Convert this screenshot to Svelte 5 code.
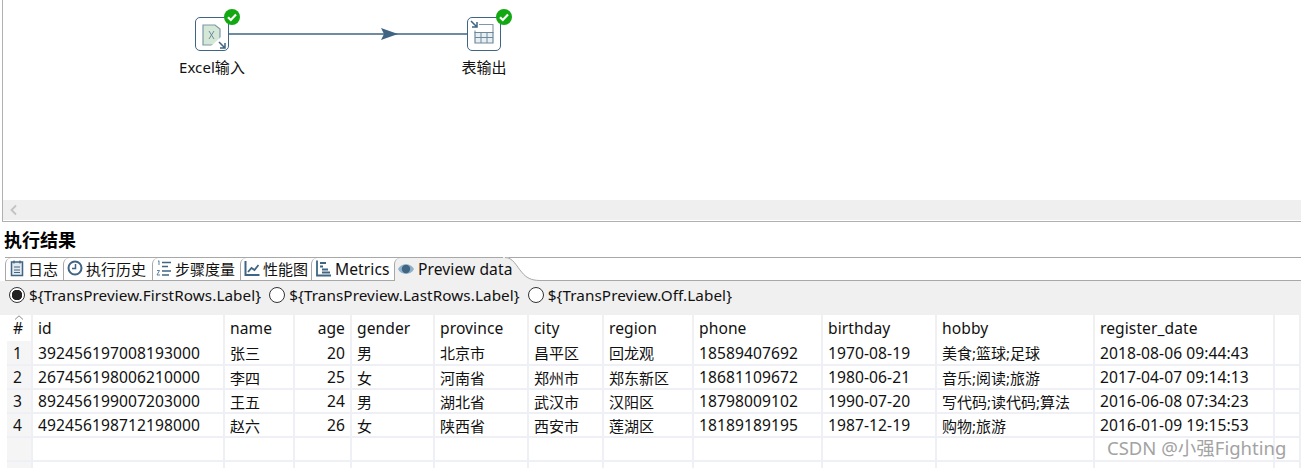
<script>
  const columns = [
    { key: 'id', width: 192 },
    { key: 'name', width: 70, cjk: true },
    { key: 'age', width: 57, right: true },
    { key: 'gender', width: 83, cjk: true },
    { key: 'province', width: 94, cjk: true },
    { key: 'city', width: 75, cjk: true },
    { key: 'region', width: 90, cjk: true },
    { key: 'phone', width: 129 },
    { key: 'birthday', width: 114 },
    { key: 'hobby', width: 158, cjk: true },
    { key: 'register_date', width: 180 }
  ];

  const rows = [
    { id: '392456197008193000', name: '张三', age: 20, gender: '男', province: '北京市', city: '昌平区', region: '回龙观', phone: '18589407692', birthday: '1970-08-19', hobby: '美食;篮球;足球', register_date: '2018-08-06 09:44:43' },
    { id: '267456198006210000', name: '李四', age: 25, gender: '女', province: '河南省', city: '郑州市', region: '郑东新区', phone: '18681109672', birthday: '1980-06-21', hobby: '音乐;阅读;旅游', register_date: '2017-04-07 09:14:13' },
    { id: '892456199007203000', name: '王五', age: 24, gender: '男', province: '湖北省', city: '武汉市', region: '汉阳区', phone: '18798009102', birthday: '1990-07-20', hobby: '写代码;读代码;算法', register_date: '2016-06-08 07:34:23' },
    { id: '492456198712198000', name: '赵六', age: 26, gender: '女', province: '陕西省', city: '西安市', region: '莲湖区', phone: '18189189195', birthday: '1987-12-19', hobby: '购物;旅游', register_date: '2016-01-09 19:15:53' },
    {},
    {}
  ];

  const options = ['${TransPreview.FirstRows.Label}', '${TransPreview.LastRows.Label}', '${TransPreview.Off.Label}'];
  let picked = 0;

  const tabs = [
    { label: '日志', icon: 'log', w: 58 },
    { label: '执行历史', icon: 'clock', w: 89 },
    { label: '步骤度量', icon: 'steps', w: 88 },
    { label: '性能图', icon: 'chart', w: 71 },
    { label: 'Metrics', icon: 'metrics', w: 83, latin: true }
  ];
</script>

<div class="page">
  <section class="canvas">
    <div class="graph">
      <svg class="hop" width="1298" height="60" viewBox="0 0 1298 60">
        <path d="M226 34H464" stroke="#3f6583" stroke-width="1.4" fill="none" />
        <path d="M378 28l17 6-17 6 3-6z" fill="#3f6583" />
      </svg>

      <div class="step excel">
        <div class="box">
          <svg width="32" height="32" viewBox="0 0 32 32">
            <path d="M7 7h12l5 4v16H7z" fill="#d5e8d8" stroke="#7d98a8" stroke-width="1.2" />
            <path d="M15 28l10-9v9z" fill="#fff" />
            <path d="M13 13l5 8M18 13l-5 8" stroke="#6d8a9c" stroke-width="1" fill="none" />
            <path d="M23 24l6 6M29 25v5h-5" stroke="#3f6583" stroke-width="1.5" fill="none" />
          </svg>
        </div>
        <svg class="ok" width="16" height="16" viewBox="0 0 16 16">
          <circle cx="8" cy="8" r="8" fill="#12a812" />
          <path d="M4 8.2l2.800 2.800L12 5.600" stroke="#fff" stroke-width="2.200" fill="none" />
        </svg>
        <span class="caption">Excel输入</span>
      </div>

      <div class="step out">
        <div class="box">
          <svg width="32" height="32" viewBox="0 0 32 32">
            <path d="M3 3l6 6M9 4v5H4" stroke="#3f6583" stroke-width="1.500" fill="none" />
            <path d="M11 6.500h14v8H7v-2" stroke="#7d98a8" stroke-width="1.100" fill="none" />
            <path d="M7 14.500h18V25H7z" fill="#e8eef2" stroke="#6d8a9c" stroke-width="1.200" />
            <path d="M13 14.500V25M19 14.500V25M7 19.500h18" stroke="#6d8a9c" stroke-width="1" fill="none" />
          </svg>
        </div>
        <svg class="ok" width="16" height="16" viewBox="0 0 16 16">
          <circle cx="8" cy="8" r="8" fill="#12a812" />
          <path d="M4 8.200l2.800 2.800L12 5.600" stroke="#fff" stroke-width="2.200" fill="none" />
        </svg>
        <span class="caption">表输出</span>
      </div>
    </div>
    <div class="hscroll">
      <svg width="10" height="12" viewBox="0 0 10 12"><path d="M7 1.500L2.500 6 7 10.500" stroke="#c2c2c2" stroke-width="1.800" fill="none" /></svg>
    </div>
  </section>

  <h2>执行结果</h2>

  <div class="tabstrip">
    {#each tabs as tab}
      <div class="tab" class:latin={tab.latin} style="width: {tab.w}px">
        <svg width="16" height="18" viewBox="0 0 16 18">
          {#if tab.icon === 'log'}
            <rect x="2.500" y="3" width="11" height="13.500" fill="#e3ebf1" stroke="#3f6583" stroke-width="1.500" />
            <path d="M5 1.500v3M11 1.500v3M5 8h6M5 11h6M5 13.500h6" stroke="#3f6583" stroke-width="1.200" />
          {:else if tab.icon === 'clock'}
            <circle cx="8" cy="9" r="6.500" fill="#fff" stroke="#3f6583" stroke-width="2" />
            <path d="M8.500 5v4.500H5" stroke="#3f6583" stroke-width="1.500" fill="none" />
          {:else if tab.icon === 'steps'}
            <path d="M6 3.500h9M6 7.500h6M6 12h9M6 16h7" stroke="#3f6583" stroke-width="1.300" />
            <path d="M2 2.500l1-.8v4.300M1 11.500h2.500l-2.500 4.500h3" stroke="#4d7390" stroke-width=".9" fill="none" />
          {:else if tab.icon === 'chart'}
            <path d="M1.500 2v14h14" stroke="#3f6583" stroke-width="2" fill="none" />
            <path d="M4 13l3.500-4 3 2 4-5" stroke="#3f6583" stroke-width="1.800" fill="none" />
          {:else}
            <path d="M2 1.500v15h14" stroke="#3f6583" stroke-width="1.800" fill="none" />
            <path d="M5 4h6M5 7.500h3M7 10.500h6M7 13.500h8" stroke="#3f6583" stroke-width="2" />
          {/if}
        </svg>
        <span>{tab.label}</span>
      </div>
    {/each}
    <div class="tab active">
      <svg width="16" height="18" viewBox="0 0 16 18">
        <path d="M0 9c3-6.500 13-6.500 16 0-3 6.500-13 6.500-16 0z" fill="#8fb0c8" />
        <circle cx="8" cy="9" r="4.200" fill="#3f6583" />
      </svg>
      <span>Preview data</span>
    </div>
    <svg class="curve" width="37" height="24" viewBox="0 0 37 24">
      <path d="M0 24V0h2c8 0 11 8 17 15 4 5 9 8 18 8v1z" fill="#f0f0f0" />
      <path d="M2 .500c8 0 11 8 17 15 4 5 9 8 18 8" stroke="#a8a8a8" fill="none" />
    </svg>
    <div class="rest"></div>
  </div>

  <div class="radios">
    {#each options as option, i}
      <label>
        <input type="radio" name="rows" value={i} bind:group={picked} />
        <span>{option}</span>
      </label>
    {/each}
  </div>

  <table>
    <colgroup>
      <col style="width: 25px" />
      {#each columns as col}
        <col style="width: {col.width}px" />
      {/each}
      <col />
    </colgroup>
    <thead>
      <tr>
        <th class="num">
          <svg class="sort" width="10" height="5" viewBox="0 0 10 5"><path d="M1 4.500L5 .8 9 4.500" stroke="#8a8a8a" fill="none" /></svg>
          #
        </th>
        {#each columns as col}
          <th class:right={col.right}>{col.key}</th>
        {/each}
        <th></th>
      </tr>
    </thead>
    <tbody>
      {#each rows as row, i}
        <tr>
          <td class="num">{row.id ? i + 1 : ''}</td>
          {#each columns as col}
            <td class:right={col.right} class:cjk={col.cjk}>{row[col.key] ?? ''}</td>
          {/each}
          <td></td>
        </tr>
      {/each}
    </tbody>
  </table>

  <div class="mark">CSDN @小强Fighting</div>
</div>

<style>
  :global(body) {
    margin: 0;
    background: #fff;
    overflow: hidden;
  }
  .page {
    position: relative;
    width: 1301px;
    height: 468px;
    overflow: hidden;
    font-family: "Noto Sans", "Noto Sans CJK SC", sans-serif;
    font-size: 15.600px;
    letter-spacing: .08px;
    color: #111;
  }
  .canvas {
    height: 221px;
    margin-left: 2px;
    border-left: 1px solid #b0b0b0;
    border-bottom: 1px solid #b0b0b0;
    display: flex;
    flex-direction: column;
  }
  .graph {
    position: relative;
    height: 200px;
  }
  .hop {
    position: absolute;
    left: 0;
    top: 0;
  }
  .step {
    position: absolute;
    top: 17px;
    width: 34px;
  }
  .excel { left: 192px; }
  .out { left: 464px; }
  .box {
    width: 32px;
    height: 32px;
    border: 1px solid #3f6583;
    border-radius: 5px;
    background: #fff;
    position: relative;
  }
  .ok {
    position: absolute;
    left: 29px;
    top: -8px;
  }
  .caption {
    position: absolute;
    top: 41px;
    left: 50%;
    transform: translateX(-50%);
    white-space: nowrap;
    font-size: 15px;
    line-height: 18px;
  }
  .hscroll {
    height: 20px;
    background: #efefef;
    padding-left: 6px;
    display: flex;
    align-items: center;
  }
  h2 {
    margin: 0;
    height: 35px;
    padding-left: 4px;
    font-size: 18px;
    letter-spacing: 0;
    line-height: 36px;
    font-weight: 700;
    color: #000;
  }
  .tabstrip {
    display: flex;
    height: 24px;
    margin-left: 5px;
    box-sizing: border-box;
    border-top: 1px solid #a8a8a8;
    position: relative;
  }
  .tab {
    flex: none;
    height: 23px;
    box-sizing: border-box;
    border-left: 1px solid #a8a8a8;
    border-bottom: 1px solid #a8a8a8;
    border-top-left-radius: 6px;
    display: flex;
    align-items: center;
    gap: 3px;
    padding: 0 0 2px 3px;
    white-space: nowrap;
    font-size: 15px;
    letter-spacing: 0;
  }
  .tab svg {
    flex: none;
  }
  .tab.latin {
    font-size: 15.600px;
    letter-spacing: .08px;
    gap: 4px;
  }
  .tab.latin span {
    padding-top: 2px;
  }
  .tab.active {
    width: 109px;
    border-bottom: 0;
    background: #f0f0f0;
    font-size: 15.600px;
    letter-spacing: .08px;
    gap: 4px;
  }
  .tab.active span {
    position: relative;
    z-index: 1;
  }
  .curve {
    flex: none;
    margin-top: -1px;
  }
  .rest {
    flex: 1;
    height: 23px;
    box-sizing: border-box;
    border-bottom: 1px solid #a8a8a8;
  }
  .radios {
    height: 34px;
    box-sizing: border-box;
    padding: 0 0 6px 9px;
    background: #f0f0f0;
    display: flex;
    align-items: center;
    gap: 8px;
    font-size: 15.270px;
  }
  .radios label {
    display: flex;
    align-items: center;
    gap: 4px;
    white-space: nowrap;
  }
  .radios input {
    appearance: none;
    width: 16px;
    height: 16px;
    margin: 0;
    border: 1px solid #333;
    border-radius: 50%;
    background: #fff;
  }
  .radios input:checked {
    background: radial-gradient(circle, #222 0 5px, #fff 5.500px);
  }
  table {
    margin-left: 7px;
    width: 1294px;
    table-layout: fixed;
    border-collapse: collapse;
  }
  th, td {
    padding: 0 5px;
    text-align: left;
    font-weight: 400;
    white-space: nowrap;
    box-sizing: border-box;
    border-right: 2px solid #eef0f6;
  }
  th {
    height: 26px;
    border-right-color: #f0f0f0;
  }
  td {
    height: 24px;
    border-bottom: 2px solid #eef0f6;
  }
  td.cjk {
    font-size: 15px;
    letter-spacing: 0;
  }
  th.right, td.right {
    text-align: right;
  }
  .num {
    position: relative;
    background: #f5f5f5;
    padding: 0 0 0 6px;
  }
  th.num {
    background: #fff;
  }
  .sort {
    position: absolute;
    left: 7px;
    top: 0;
  }
  .mark {
    position: absolute;
    left: 1107px;
    top: 436px;
    font-size: 18.500px;
    letter-spacing: 0;
    line-height: 24px;
    color: #a3a3a3;
    white-space: nowrap;
  }
</style>
